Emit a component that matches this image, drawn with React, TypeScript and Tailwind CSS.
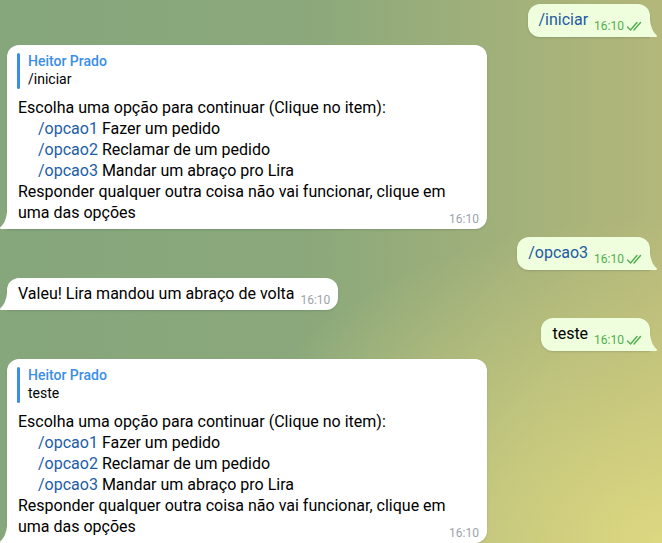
const TAIL =
  "M6 17H0V0c.193 2.84.876 5.767 2.05 8.782.904 2.325 2.446 4.485 4.625 6.48A1 1 0 016 17z";

const Tail = ({ side }: { side: "in" | "out" }) =>
  side === "out" ? (
    <svg width="11" height="20" viewBox="0 0 11 20" className="absolute left-full bottom-[-3px]">
      <path d={TAIL} fill="#effedd" />
    </svg>
  ) : (
    <svg width="11" height="20" viewBox="0 0 11 20" className="absolute right-full bottom-[-3px]">
      <path d={TAIL} fill="#ffffff" transform="matrix(-1 0 0 1 11 0)" />
    </svg>
  );

const Checks = () => (
  <svg width="16" height="11" viewBox="0 0 16 11" fill="none" stroke="#4fae4e" strokeWidth="1.4" strokeLinecap="round" strokeLinejoin="round">
    <path d="M1.5 6l3 3 6.5-7.5" />
    <path d="M8 9L14.5 1.5" />
  </svg>
);

const Time = ({ out }: { out?: boolean }) => (
  <span
    className={
      "float-right relative top-[10px] ml-[6px] flex items-center gap-[2px] text-[12px] leading-[14px] " +
      (out ? "text-[#4fae4e]" : "text-[#9aa3ab]")
    }
  >
    16:10
    {out && <Checks />}
  </span>
);

const Out = ({ text, link }: { text: string; link?: boolean }) => (
  <div className="relative mr-[12px] self-end rounded-[12px] rounded-br-none bg-[#effedd] pl-[11px] pr-[8px] pt-[5px] pb-[7px] shadow-[0_1px_2px_rgba(16,35,47,0.15)]">
    <div className="leading-[21px]">
      <span className={link ? "text-[#1d5aa3]" : ""}>{text}</span>
      <Time out />
    </div>
    <Tail side="out" />
  </div>
);

const Opt = ({ cmd, label }: { cmd: string; label: string }) => (
  <div className="pl-[20px]">
    <span className="text-[#1d5da5]">{cmd}</span> {label}
  </div>
);

const Menu = ({ quote }: { quote: string }) => (
  <div className="relative ml-[7px] w-[480px] shrink-0 rounded-[12px] rounded-bl-none bg-white pl-[11px] pr-[8px] pt-[8px] pb-[6px] shadow-[0_1px_2px_rgba(16,35,47,0.15)]">
    <div className="-ml-[1px] mb-[8px] flex gap-[8px]">
      <div className="w-[3px] rounded-full bg-[#3a8ee6]" />
      <div className="text-[14px]">
        <div className="font-medium leading-[16px] text-[#3a8ee6]">Heitor Prado</div>
        <div className="leading-[20px]">{quote}</div>
      </div>
    </div>
    <div className="leading-[21px]">
      <div>Escolha uma opção para continuar (Clique no item):</div>
      <Opt cmd="/opcao1" label="Fazer um pedido" />
      <Opt cmd="/opcao2" label="Reclamar de um pedido" />
      <Opt cmd="/opcao3" label="Mandar um abraço pro Lira" />
      <div>Responder qualquer outra coisa não vai funcionar, clique em</div>
      <div>
        uma das opções
        <Time />
      </div>
    </div>
    <Tail side="in" />
  </div>
);

export default function App() {
  return (
    <div className="flex h-[543px] w-full flex-col items-start gap-2 overflow-hidden pt-[4px] text-[16px] text-black font-['Roboto',sans-serif] bg-[radial-gradient(ellipse_70%_60%_at_100%_100%,#dcd780_0%,rgba(220,215,128,0)_100%),linear-gradient(90deg,#86a67b_0%,#8aa87b_45%,#b3b77a_100%)]">
      <Out text="/iniciar" link />
      <Menu quote="/iniciar" />
      <Out text="/opcao3" link />
      <div className="relative ml-[7px] rounded-[12px] rounded-bl-none bg-white pl-[11px] pr-[8px] pt-[5px] pb-[6px] shadow-[0_1px_2px_rgba(16,35,47,0.15)]">
        <div className="leading-[21px]">
          Valeu! Lira mandou um abraço de volta
          <Time />
        </div>
        <Tail side="in" />
      </div>
      <Out text="teste" />
      <Menu quote="teste" />
    </div>
  );
}
